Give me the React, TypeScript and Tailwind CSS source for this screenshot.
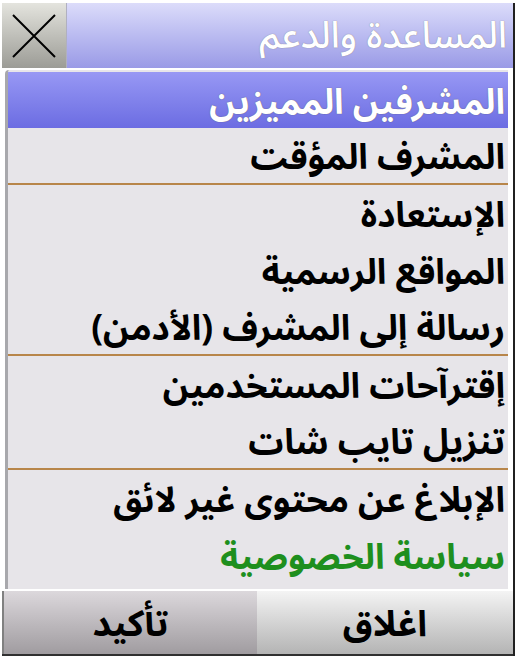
import React from "react";

const items: { t: string; sep?: boolean; green?: boolean }[] = [
  { t: "المشرف المؤقت", sep: true },
  { t: "الإستعادة" },
  { t: "المواقع الرسمية" },
  { t: "رسالة إلى المشرف (الأدمن)", sep: true },
  { t: "إقترآحات المستخدمين" },
  { t: "تنزيل تايب شات", sep: true },
  { t: "الإبلاغ عن محتوى غير لائق" },
  { t: "سياسة الخصوصية", green: true },
];

export default function App() {
  return (
    <div className="w-[521px] h-[657px] bg-white overflow-hidden font-['Noto_Sans_Arabic_UI','Noto_Sans_Arabic',sans-serif]">
      <div className="h-[3px]" />
      <div className="ml-[2px] w-[513px] border-r-2 border-[#202020] flex flex-col">
        {/* title bar */}
        <div className="h-[65px] flex bg-gradient-to-b from-[#dcdcfa] to-[#9a9ae6]">
          <div className="w-[65px] h-full bg-gradient-to-b from-[#e4e4de] to-[#9c9c96] flex items-center justify-center border-r border-[#b0b0c0]">
            <svg width="48" height="48" viewBox="0 0 48 48">
              <path d="M3 3 L45 45 M45 3 L3 45" stroke="#000" strokeWidth="2" />
            </svg>
          </div>
          <div dir="rtl" className="flex-1 flex items-center pr-[6px] pb-[4px] text-white text-[37px] font-medium leading-none [text-shadow:0_0_1px_#777]">
            المساعدة والدعم
          </div>
        </div>
        {/* list */}
        <div className="mt-[2px] ml-[3px] mr-[5px] h-[519px] bg-[#e7e5e9] border-l-[3px] border-[#a8a8ac] rounded-tl-[4px] pt-[2px] overflow-hidden">
          <div dir="rtl" className="h-[56px] flex items-center pr-[3px] bg-gradient-to-b from-[#9898f4] to-[#6c6ce2] text-white font-bold text-[35px] leading-none [text-shadow:0_0_1px_#555]">
            المشرفين المميزين
          </div>
          {items.map((it, i) => (
            <div
              key={i}
              dir="rtl"
              className={`h-[57px] flex items-center pr-[3px] font-bold text-[35px] leading-none whitespace-nowrap ${it.green ? "text-[#1e8f1e]" : "text-black"} ${it.sep ? "border-b-2 border-[#b8864a]" : ""}`}
            >
              {it.t}
            </div>
          ))}
        </div>
        {/* bottom bar */}
        <div className="mt-[2px] h-[65px] flex border-b-2 border-[#303030] text-[36px] font-bold leading-none">
          <div className="w-[255px] flex items-center justify-center bg-gradient-to-b from-[#dcd8dc] to-[#a09ca0] border-l-2 border-[#808080]">
            تأكيد
          </div>
          <div className="flex-1 flex items-center justify-center bg-gradient-to-b from-[#f4f4f4] to-[#b4b4b4]">
            اغلاق
          </div>
        </div>
      </div>
    </div>
  );
}
